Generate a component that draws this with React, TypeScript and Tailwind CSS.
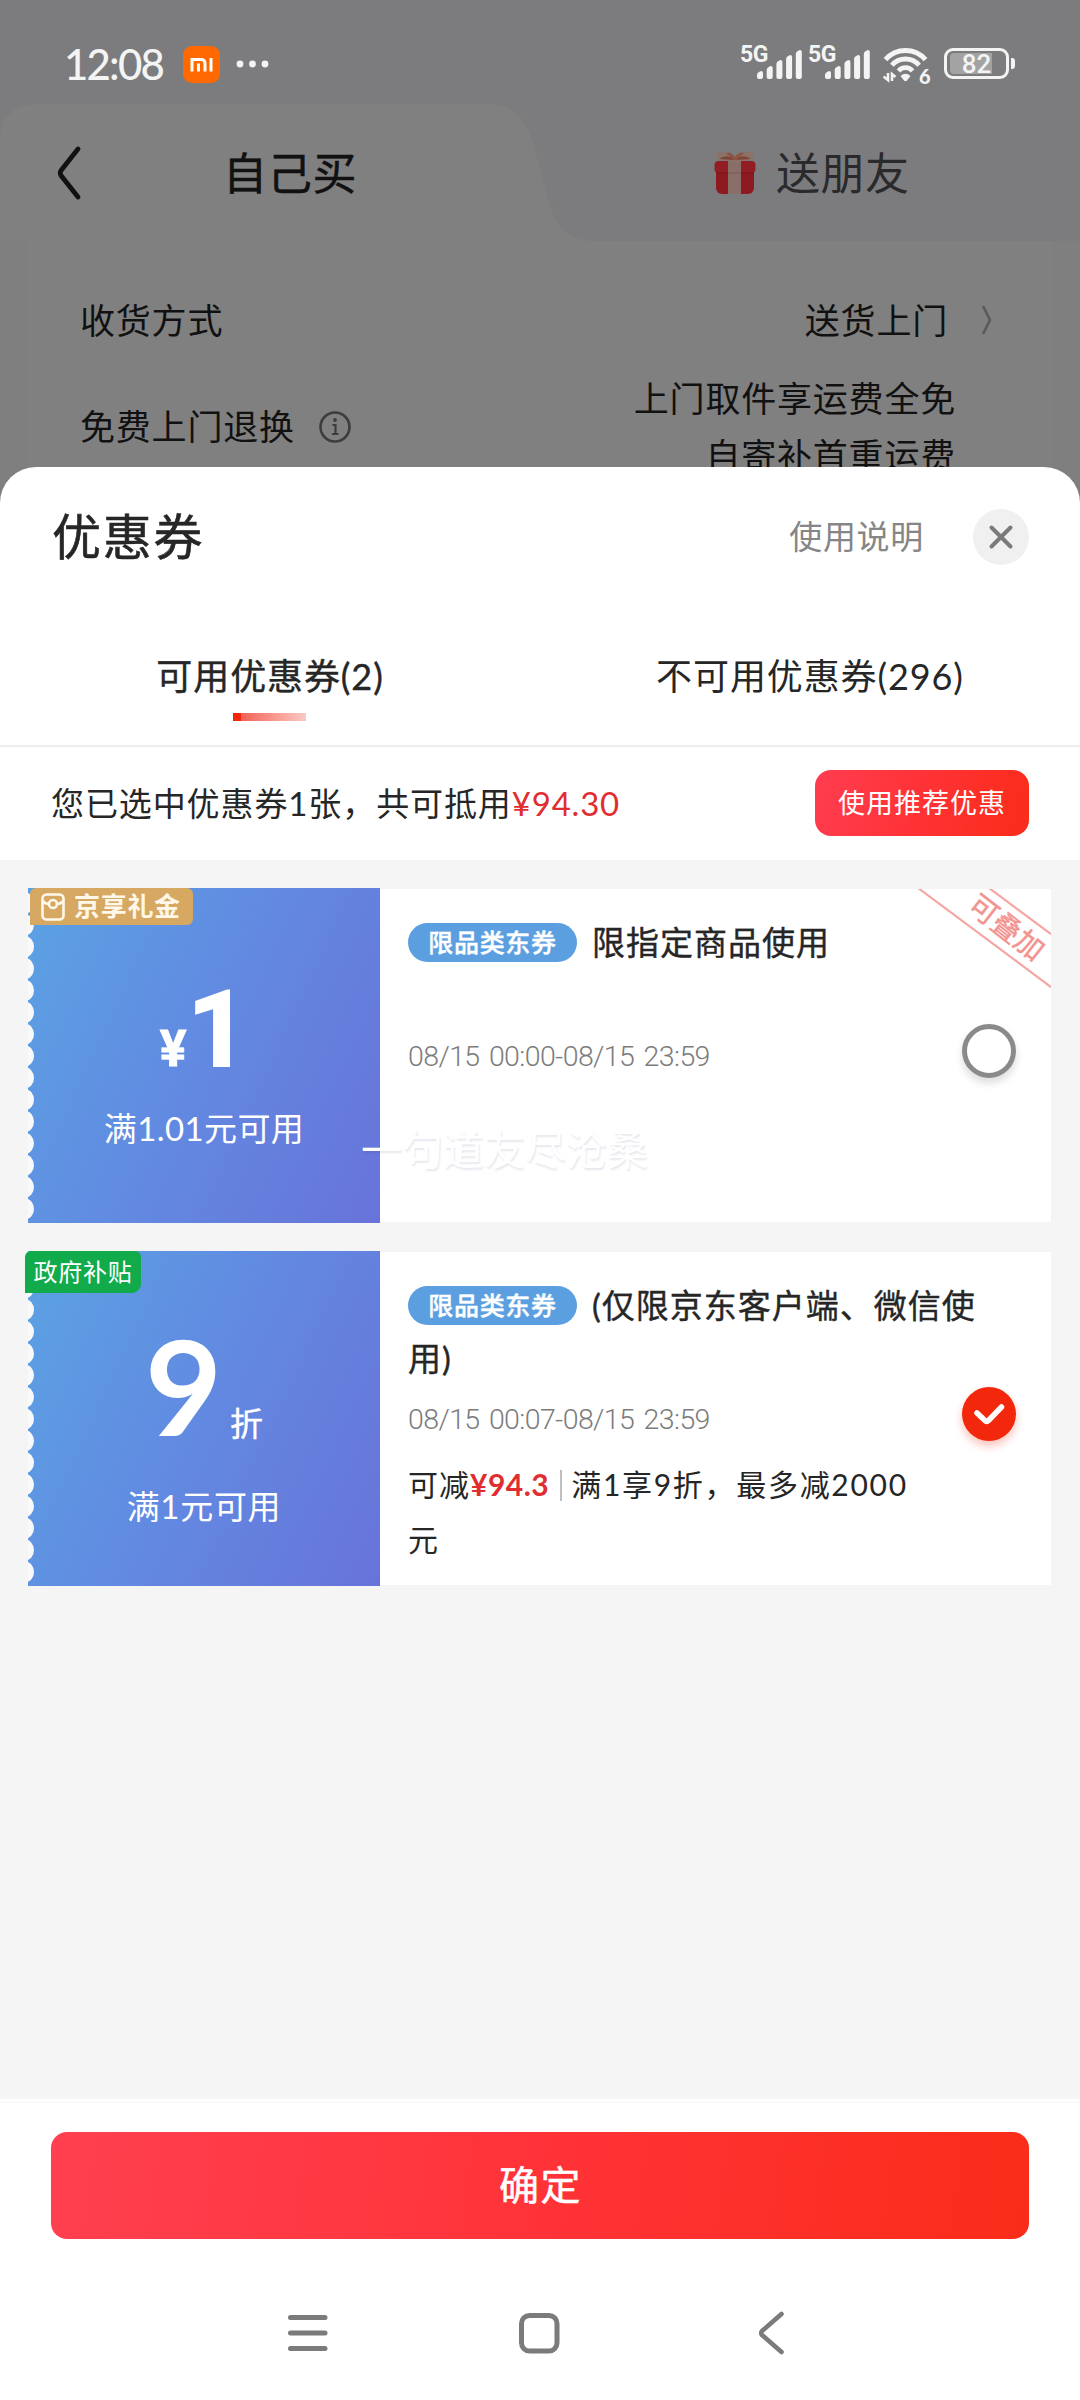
import type { ReactNode } from 'react';

function Signal() {
  const tops = [22, 17, 11, 6, 1];
  return (
    <div className="relative h-[36px] w-[62px]">
      <span className="absolute top-[-1px] left-[-1px] font-['Roboto',sans-serif] text-[23px] leading-[22px] font-bold tracking-[-0.500px]">5G</span>
      <svg className="absolute top-[4px] left-[16px]" width="46" height="32" viewBox="0 0 46 32" fill="#f4f4f4">
        {tops.map((t, i) => (
          <path key={t} d={`M${i * 9.7} ${t + 4} Q${i * 9.7} ${t + 2} ${i * 9.7 + 2} ${t + 1} L${i * 9.7 + 4} ${t} Q${i * 9.7 + 6} ${t} ${i * 9.7 + 6} ${t + 2} V28 Q${i * 9.7 + 6} 30 ${i * 9.7 + 4} 30 H${i * 9.7 + 2} Q${i * 9.7} 30 ${i * 9.7} 28 Z`} />
        ))}
      </svg>
    </div>
  );
}

function StatusBar() {
  return (
    <div className="flex h-[104px] shrink-0 items-start bg-[#7c7c7e] text-[#f4f4f4]">
      <div className="mt-[40px] ml-[64px] flex h-[48px] items-center">
        <span className="w-[119px] font-['Lato',sans-serif] text-[42px] leading-[48px] font-medium tracking-[-1.800px]">12:08</span>
        <svg width="37" height="37" viewBox="0 0 37 37">
          <rect width="37" height="37" rx="9" fill="#ff6900" />
          <path d="M9 25.500V13.500H18Q22 13.500 22 17.500V25.500M15.500 17.500V25.500M28 12V25.500" fill="none" stroke="#fff" strokeWidth="3" />
        </svg>
        <svg className="ml-[16px]" width="34" height="8" viewBox="0 0 34 8" fill="#f4f4f4">
          <circle cx="4" cy="4" r="3.400" /><circle cx="16.500" cy="4" r="3.400" /><circle cx="29" cy="4" r="3.400" />
        </svg>
      </div>
      <div className="mt-[45px] mr-[65px] ml-auto flex h-[38px] items-start">
        <Signal />
        <div className="ml-[6px]"><Signal /></div>
        <div className="relative ml-[12px] h-[40px] w-[50px]">
          <svg width="50" height="40" viewBox="0 0 50 40" fill="none" stroke="#f4f4f4">
            <path d="M2.500 14.700A26.500 26.500 0 0 1 42.500 14.700" strokeWidth="5" />
            <path d="M8.900 20.300A17.800 17.800 0 0 1 36.100 20.300" strokeWidth="4.800" />
            <path d="M15.500 26A9 9 0 0 1 29.500 26" strokeWidth="4.600" />
            <path d="M17.500 31Q22.500 26.500 27.500 31L24 35.500Q22.500 37 21 35.500Z" fill="#f4f4f4" stroke="none" />
            <path d="M0.500 31.500L5 35V28M9 36V29L12.500 32" strokeWidth="2.600" />
          </svg>
          <span className="absolute top-[21px] left-[36px] font-['Lato',sans-serif] text-[20px] leading-[20px] font-black">6</span>
        </div>
        <div className="mt-[3px] ml-[11px] flex items-center">
          <div className="relative flex h-[31px] w-[65px] items-center justify-center rounded-[9px] border-[3px] border-[#f4f4f4]">
            <div className="absolute top-[2px] left-[3px] h-[21px] w-[42px] rounded-l-[4px] bg-[#a3a3a4]" />
            <span className="relative font-['Roboto',sans-serif] text-[26px] leading-[26px] font-medium">82</span>
          </div>
          <div className="ml-[2px] h-[11px] w-[4px] rounded-r-[3px] bg-[#f4f4f4]" />
        </div>
      </div>
    </div>
  );
}

function Gift() {
  return (
    <svg width="42" height="46" viewBox="0 0 42 46">
      <path d="M21 11C15 1 2 -1 2 5C2 11 12 11 21 11C30 11 40 11 40 5C40 -1 27 1 21 11Z" fill="#8d7268" />
      <path d="M5 9Q14 3 20 10ZM37 9Q28 3 22 10Z" fill="#7d4437" />
      <path d="M19.500 10L12 3Q17 1 21 7Q25 1 30 3L22.500 10Z" fill="#8b5443" />
      <rect x="2" y="15" width="38" height="29" rx="6" fill="#8c1a20" />
      <rect x="0.500" y="11" width="41" height="12" rx="4" fill="#921d24" />
      <path d="M2 23H40" stroke="#791419" strokeWidth="1.200" />
      <rect x="14" y="11" width="13" height="33" fill="#8a6f68" />
      <path d="M14 23H27" stroke="#775b54" />
    </svg>
  );
}

function OrderPage() {
  return (
    <div className="flex h-[467px] shrink-0 flex-col overflow-hidden bg-[#7f7f7f] text-[#111]">
      <StatusBar />
      <div className="relative flex h-[137px] shrink-0 bg-[#7c7c7e]">
        <svg className="absolute inset-0" width="1080" height="137" viewBox="0 0 1080 137">
          <path d="M0 137V35Q2 0 38 0H488Q522 0 534 42L548 96Q559 137 592 137Z" fill="#808080" />
        </svg>
        <div className="relative flex w-[540px] items-center">
          <svg className="ml-[56px]" width="26" height="56" viewBox="0 0 26 56" fill="none" stroke="#111" strokeWidth="4.800" strokeLinecap="round" strokeLinejoin="round">
            <path d="M22 4L5 25.500Q3.500 28 5 30.500L22 52" />
          </svg>
          <span className="ml-[141px] text-[44px] leading-[60px] tracking-[0.700px] [-webkit-text-stroke:0.500px_#111]">自己买</span>
        </div>
        <div className="relative flex flex-1 items-center text-[#2a2a2c]">
          <div className="ml-[174px]"><Gift /></div>
          <span className="ml-[20px] text-[44px] leading-[60px] tracking-[0.500px]">送朋友</span>
        </div>
      </div>
      <div className="mx-[28px] flex shrink-0 flex-col bg-[#808080] pt-[50px] pr-[59px] pl-[52px] text-[35px] leading-[57px] tracking-[0.800px]">
        <div className="flex h-[58px] items-center justify-between">
          <span>收货方式</span>
          <span className="flex items-center">
            送货上门
            <svg className="ml-[33px]" width="12" height="30" viewBox="0 0 12 30" fill="none" stroke="#5a5a5a" strokeWidth="2.600">
              <path d="M2 1L9 15L2 29" />
            </svg>
          </span>
        </div>
        <div className="mt-[21px] flex items-start justify-between">
          <span className="mt-[28px] flex items-center">
            免费上门退换
            <svg className="ml-[23px]" width="34" height="34" viewBox="0 0 34 34" fill="none" stroke="#3d3d3d" strokeWidth="2.600">
              <circle cx="17" cy="17" r="14.500" /><path d="M14.500 15H17.500V24M14 24H20.500" strokeWidth="2.200" /><circle cx="17" cy="10" r="0.900" strokeWidth="2" />
            </svg>
          </span>
          <span className="mr-[37px] text-right">上门取件享运费全免<br />自寄补首重运费</span>
        </div>
      </div>
    </div>
  );
}

const SCALLOPS = Array.from({ length: 15 }, (_, i) => 15 + i * 21.85);

interface CouponProps {
  value: ReactNode;
  badge: ReactNode;
  children: ReactNode;
  extra?: ReactNode;
}

function Coupon({ value, badge, children, extra }: CouponProps) {
  return (
    <div className="relative ml-[28px] flex h-[335px] w-[1023px] shrink-0">
      <div className="relative flex w-[352px] shrink-0 flex-col items-center bg-[linear-gradient(115deg,#5ba2e3_0%,#6289e1_50%,#6873d9_100%)] text-white">
        <svg className="absolute top-0 left-0" width="8" height="335" viewBox="0 0 8 335" fill="#f7f9fb">
          {SCALLOPS.map((y) => <ellipse key={y} cx="-3" cy={y} rx="9" ry="10.500" />)}
        </svg>
        {value}
      </div>
      {badge}
      <div className="relative my-px flex-1 overflow-hidden bg-white">{children}</div>
      {extra}
    </div>
  );
}

function Pill() {
  return (
    <span className="mr-[15px] inline-flex h-[39px] w-[169px] items-center justify-center rounded-full bg-[#5b9fe0] align-[3px] text-[25px] leading-[37px] font-medium tracking-[0.700px] text-white">
      限品类东券
    </span>
  );
}

function DateRange({ children }: { children: ReactNode }) {
  return (
    <div className="h-[36px] font-['Roboto',sans-serif] text-[28.500px] leading-[36px] font-light tracking-[-0.600px] whitespace-pre text-[#7c7c7c] [word-spacing:3px]">{children}</div>
  );
}

export default function App() {
  return (
    <div className="flex h-[2400px] w-[1080px] flex-col overflow-hidden bg-[#7f7f7f] font-['Lato','Noto_Sans_CJK_SC',sans-serif] text-[#262626]">
      <OrderPage />
      <div className="flex h-[1933px] flex-col overflow-hidden rounded-t-[36px] bg-white">
        <div className="flex h-[140px] shrink-0 items-center pr-[51px] pb-[2px] pl-[52px]">
          <h1 className="text-[49px] leading-[70px] tracking-[1.800px] [-webkit-text-stroke:0.600px_#262626]">优惠券</h1>
          <span className="mr-[49px] ml-auto text-[33px] leading-[50px] tracking-[0.700px] text-[#868686]">使用说明</span>
          <button className="mt-[2px] flex h-[56px] w-[56px] items-center justify-center rounded-full bg-[#f0f0f0]">
            <svg width="26" height="26" viewBox="0 0 26 26" stroke="#7b7b7b" strokeWidth="4" strokeLinecap="round"><path d="M3.500 3.500L22.500 22.500M22.500 3.500L3.500 22.500" /></svg>
          </button>
        </div>

        <div className="flex h-[140px] shrink-0 border-b-2 border-[#eeeeee] text-[36px] leading-[54px] tracking-[0.900px]">
          <div className="relative flex flex-1 items-center justify-center [-webkit-text-stroke:0.400px_#262626]">
            可用优惠券(2)
            <div className="absolute top-[106px] left-[233px] flex h-[8px] w-[73px]">
              <div className="w-[8px] bg-[#f2270c]" />
              <div className="flex-1 bg-linear-to-r from-[#ef5f55] to-[#fbc9c5]" />
            </div>
          </div>
          <div className="flex flex-1 items-center justify-center">不可用优惠券(296)</div>
        </div>

        <div className="flex h-[113px] shrink-0 items-center justify-between pr-[51px] pb-[2px] pl-[51px]">
          <span className="text-[33px] leading-[50px] tracking-[0.900px]">您已选中优惠券1张，共可抵用<span className="tracking-[0.800px] text-[#e02e30]">¥94.30</span></span>
          <button className="h-[66px] w-[214px] rounded-[16px] bg-[linear-gradient(105deg,#ff3d50_0%,#ff3338_45%,#fa2c19_100%)] text-[27px] leading-[66px] tracking-[1px] text-white">使用推荐优惠</button>
        </div>

        <div className="flex h-[1239px] shrink-0 flex-col gap-[28px] bg-[#f5f5f5] pt-[28px]">
          <Coupon
            value={
              <>
                <div className="mt-[82px] flex h-[120px] items-baseline font-['Roboto',sans-serif] leading-[120px] font-bold">
                  <span className="mr-[1px] text-[50px] [-webkit-text-stroke:0.800px_white]">¥</span>
                  <span className="text-[106px] [-webkit-text-stroke:2px_white]">1</span>
                </div>
                <div className="mt-[13px] text-[33px] leading-[50px] tracking-[0.400px]">满1.01元可用</div>
              </>
            }
            badge={
              <div className="absolute top-0 left-[2px] flex h-[37px] w-[163px] items-center rounded-r-[6px] rounded-tl-[6px] bg-[#d6a862] pl-[11px] text-[26px] leading-[37px] font-bold tracking-[0.700px] text-[#fff8ea]">
                <svg className="mr-[9px]" width="24" height="28" viewBox="0 0 24 28" fill="none" stroke="#fff8ea" strokeWidth="2.600">
                  <rect x="1.500" y="1.500" width="21" height="25" rx="4" /><circle cx="12" cy="11" r="4" /><path d="M2 8Q4 11 8 11M22 8Q20 11 16 11" />
                </svg>
                京享礼金
              </div>
            }
            extra={
              <div className="absolute top-[236px] left-[333px] text-[41px] leading-[52px] whitespace-nowrap text-white [text-shadow:1px_2px_2px_rgba(70,70,120,0.13)]">一句道友尽沧桑</div>
            }
          >
            <div className="pt-[27px] pl-[28px]">
              <div className="h-[53px] text-[33px] leading-[53px] tracking-[1px] [-webkit-text-stroke:0.400px]"><Pill />限指定商品使用</div>
              <div className="mt-[70px]"><DateRange>08/15 00:00-08/15 23:59</DateRange></div>
            </div>
            <div className="absolute top-[135px] left-[582px] h-[54px] w-[54px] rounded-full border-[5px] border-[#8a8a8a] shadow-[0_5px_9px_rgba(0,0,0,0.14)]" />
            <svg className="absolute top-0 right-0" width="133" height="100" viewBox="0 0 133 100" stroke="#f5a6a3" strokeWidth="2.200">
              <path d="M0 -1L133 98M71 -1L133 45" />
            </svg>
            <div className="absolute top-[18px] left-[579px] w-[96px] rotate-[38deg] text-center text-[29px] leading-[40px] text-[#f29390] [-webkit-text-stroke:0.400px_#f29390]">可叠加</div>
          </Coupon>

          <Coupon
            value={
              <>
                <div className="mt-[64px] flex h-[130px] items-baseline leading-[140px]">
                  <span className="text-[133px] font-bold">9</span>
                  <span className="ml-[8px] text-[33px] [-webkit-text-stroke:0.400px_white]">折</span>
                </div>
                <div className="mt-[36px] text-[33px] leading-[50px] tracking-[0.700px]">满1元可用</div>
              </>
            }
            badge={
              <div className="absolute top-0 left-[-3px] h-[42px] w-[116px] rounded-t-[6px] rounded-br-[9px] bg-[#11ab4c] text-center text-[24px] leading-[42px] tracking-[0.800px] text-white">政府补贴</div>
            }
          >
            <div className="w-[590px] pt-[27px] pl-[28px]">
              <div className="h-[106px] w-[580px] text-[33px] leading-[53px] tracking-[1px] [-webkit-text-stroke:0.400px]"><Pill />(仅限京东客户端、微信使<br />用)</div>
              <div className="mt-[17px]"><DateRange>08/15 00:07-08/15 23:59</DateRange></div>
              <div className="mt-[19px] text-[30px] leading-[55px] tracking-[1px]">
                可减<span className="font-bold tracking-[0.500px] text-[#e02e30]">¥94.3</span>
                <span className="mr-[9px] ml-[11px] inline-block h-[31px] w-[2px] bg-[#bfbfbf] align-[-5px]" />
                <span className="tracking-[1.700px]">满1享9折，最多减2000</span><br />元
              </div>
            </div>
            <div className="absolute top-[135px] left-[582px] flex h-[54px] w-[54px] items-center justify-center rounded-full bg-[#f2270c] shadow-[0_5px_9px_rgba(242,39,12,0.28)]">
              <svg width="32" height="24" viewBox="0 0 32 24" fill="none" stroke="#fff" strokeWidth="5.500" strokeLinecap="round" strokeLinejoin="round"><path d="M4 11L12.500 19Q14 20 15.500 18.500L28.500 5" /></svg>
            </div>
          </Coupon>
        </div>

        <div className="flex flex-1 flex-col items-center pt-[3px]">
          <div className="h-px w-full bg-[#f7f7f7]" />
          <button className="mt-[29px] h-[107px] w-[978px] rounded-[16px] bg-[linear-gradient(98deg,#ff4050_0%,#ff3338_50%,#fa2c19_100%)] pl-px text-[40px] leading-[107px] tracking-[1.500px] text-white [-webkit-text-stroke:0.500px_white]">确定</button>
          <div className="mt-[71px] flex h-[46px] w-full items-center text-[#7b7b7b]">
            <svg className="ml-[288px]" width="40" height="38" viewBox="0 0 40 38" stroke="currentColor" strokeWidth="5" strokeLinecap="round"><path d="M2.500 3.500H37M2.500 19H37M2.500 34.500H37" /></svg>
            <svg className="ml-[190px]" width="42" height="42" viewBox="0 0 42 42" fill="none" stroke="currentColor" strokeWidth="5"><rect x="3.500" y="3.500" width="35.500" height="35.500" rx="8" /></svg>
            <svg className="ml-[197px]" width="28" height="44" viewBox="0 0 28 44" fill="none" stroke="currentColor" strokeWidth="4.600" strokeLinecap="round" strokeLinejoin="round"><path d="M24.500 3L5 20Q3.500 22 5 24L24.500 41" /></svg>
          </div>
        </div>
      </div>
    </div>
  );
}
